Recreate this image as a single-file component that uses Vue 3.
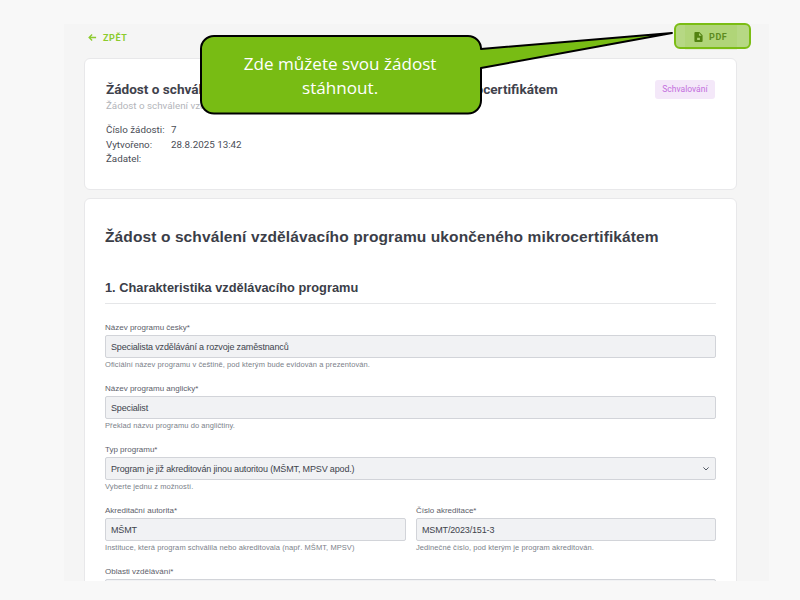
<template>
  <div class="page">
    <div class="panel">
      <div class="toolbar">
        <a class="back">
          <svg width="9" height="9" viewBox="0 0 10 10" fill="none" stroke="#8ccb2e" stroke-width="1.4"><path d="M9 5H1.4M4.6 1.6 1.2 5l3.4 3.4" /></svg>
          <span>ZPĚT</span>
        </a>
        <button class="btn-pdf">
          <svg width="9" height="10" viewBox="0 0 9 11"><path fill="#2f4a10" fill-rule="evenodd" d="M1 0h4.4L9 3.6V10a1 1 0 0 1-1 1H1a1 1 0 0 1-1-1V1a1 1 0 0 1 1-1ZM5 1v3h3L5 1ZM3 6.2v2.6h3V6.2H3Z" /></svg>
          <span>PDF</span>
        </button>
      </div>

      <section class="card head-card">
        <div class="head-top">
          <div>
            <h2>{{ title }}</h2>
            <p class="sub">{{ title }}</p>
          </div>
          <span class="badge">Schvalování</span>
        </div>
        <dl class="meta">
          <template v-for="row in meta" :key="row[0]">
            <dt>{{ row[0] }}</dt>
            <dd>{{ row[1] }}</dd>
          </template>
        </dl>
      </section>

      <section class="card form-card">
        <h1>{{ title }}</h1>
        <h3>1. Charakteristika vzdělávacího programu</h3>

        <div class="field">
          <label>Název programu česky*</label>
          <div class="input">Specialista vzdělávání a rozvoje zaměstnanců</div>
          <small>Oficiální název programu v češtině, pod kterým bude evidován a prezentován.</small>
        </div>
        <div class="field">
          <label>Název programu anglicky*</label>
          <div class="input">Specialist</div>
          <small>Překlad názvu programu do angličtiny.</small>
        </div>
        <div class="field">
          <label>Typ programu*</label>
          <div class="input select">
            <span>Program je již akreditován jinou autoritou (MŠMT, MPSV apod.)</span>
            <svg width="6" height="4" viewBox="0 0 6 4" fill="none" stroke="#555b66" stroke-width="1"><path d="M.4.4 3 3 5.6.4" /></svg>
          </div>
          <small>Vyberte jednu z možností.</small>
        </div>
        <div class="two-col">
          <div class="field">
            <label>Akreditační autorita*</label>
            <div class="input">MŠMT</div>
            <small>Instituce, která program schválila nebo akreditovala (např. MŠMT, MPSV)</small>
          </div>
          <div class="field">
            <label>Číslo akreditace*</label>
            <div class="input">MSMT/2023/151-3</div>
            <small>Jedinečné číslo, pod kterým je program akreditován.</small>
          </div>
        </div>
        <div class="field">
          <label>Oblasti vzdělávání*</label>
          <div class="input"></div>
        </div>
      </section>
    </div>

    <!-- tutorial overlay -->
    <div class="pdf-highlight"></div>
    <div class="callout">
      <svg width="476" height="84" viewBox="0 0 476 84">
        <path fill="#78bc14" stroke="#000" stroke-width="2" stroke-linejoin="round" d="M14 1H268a13 13 0 0 1 13 13L472 -2 281 33V65.5a13 13 0 0 1-13 13H14a13 13 0 0 1-13-13V14A13 13 0 0 1 14 1Z" transform="translate(0 2)" />
      </svg>
      <p>Zde můžete svou žádost<br />stáhnout.</p>
    </div>
  </div>
</template>

<script setup>
const title = 'Žádost o schválení vzdělávacího programu ukončeného mikrocertifikátem'

const meta = [
  ['Číslo žádosti:', '7'],
  ['Vytvořeno:', '28.8.2025 13:42'],
  ['Žadatel:', '']
]
</script>

<style>
html, body { margin: 0; background: #f8f8f8; }
</style>

<style scoped>
.page {
  position: relative;
  width: 800px; height: 600px;
  padding-top: 24px; box-sizing: border-box;
  overflow: hidden;
  background: #f8f8f8;
  font-family: Roboto, "Liberation Sans", sans-serif;
  color: #3b3e48;
}
.panel {
  width: 705px; height: 557px; margin-left: 64px;
  padding: 0 32px 0 20px; box-sizing: border-box;
  background: #f5f5f5;
  overflow: hidden;
}
.toolbar {
  display: flex; justify-content: space-between; align-items: center;
  height: 34px; padding: 0 0 0 4px;
  margin-right: -14px;
}
.back {
  display: flex; align-items: center; gap: 6px;
  font-size: 9px; font-weight: 700; letter-spacing: .6px; color: #8ccb2e;
  margin-top: -7px;
}
.btn-pdf {
  display: flex; align-items: center; gap: 6px;
  width: 52px; height: 26px; margin: -8px 14px 0 0; padding: 0 0 0 9px;
  border: 0; background: #e8eedc;
  font: 700 9px Roboto, sans-serif; letter-spacing: .6px; color: #42582c;
}
.card {
  background: #fff;
  border: 1px solid #e8e8ea;
  border-radius: 6px;
  box-sizing: border-box;
}
.head-card { height: 132px; padding: 20px 21px 0; margin-bottom: 8px; }
.head-top { display: flex; justify-content: space-between; align-items: flex-start; }
h2 { margin: 0; font-size: 13.6px; line-height: 20px; font-weight: 700; color: #3f424c; }
.sub { margin: 1px 0 0; font-size: 9.8px; line-height: 12px; color: #b3b5ba; }
.badge {
  margin-top: 1px;
  padding: 0 7.5px; height: 19px; line-height: 19px;
  background: #f4e8f9; color: #c36fdd; border-radius: 3px;
  font-size: 8.5px;
}
.meta {
  display: grid; grid-template-columns: 65px 1fr;
  margin: 11px 0 0; font-size: 9.8px; line-height: 14.6px; color: #4a4d56;
}
.meta dd { margin: 0; }
.form-card { padding: 0 20px; height: 420px; font-family: "Liberation Sans", Arial, sans-serif; }
h1 {
  margin: 0; padding-top: 28px;
  font-size: 15.5px; line-height: 20px; font-weight: 700; letter-spacing: .11px; color: #3b3e48;
  white-space: nowrap;
}
h3 {
  margin: 32px 0 19px; padding-bottom: 7px;
  border-bottom: 1px solid #e5e6e8;
  font-size: 12.8px; line-height: 17px; font-weight: 700; color: #3b3e48;
}
.field { margin-bottom: 14px; }
label {
  display: block; height: 12px;
  font-size: 8px; line-height: 10px; color: #5c606a;
}
.input {
  display: flex; align-items: center; justify-content: space-between;
  height: 23px; padding: 0 5px; box-sizing: border-box;
  background: #f1f2f4;
  border: 1px solid #d2d4d9; border-radius: 2px;
  font-size: 9px; letter-spacing: -.15px; color: #40434c;
}
.select { padding-right: 6px; }
small {
  display: block; margin-top: 2px;
  font-size: 7.5px; line-height: 10px; letter-spacing: .08px; color: #7b7f8a;
}
.two-col { display: grid; grid-template-columns: 301px 300px; gap: 10px; }
.pdf-highlight {
  position: absolute; left: 674px; top: 23px;
  width: 77px; height: 26px; box-sizing: border-box;
  border: 2px solid #7bbd14; border-radius: 6px;
  background: rgba(120, 188, 20, .5);
}
.callout {
  position: absolute; left: 199.6px; top: 33px;
  width: 476px; height: 84px;
}
.callout svg { position: absolute; left: 0; top: 0; overflow: visible; }
.callout p {
  position: relative; margin: 0;
  width: 281px; padding-top: 19px;
  font: 17.1px/24px "Open Sans", sans-serif;
  text-align: center; color: #fff;
}
</style>
